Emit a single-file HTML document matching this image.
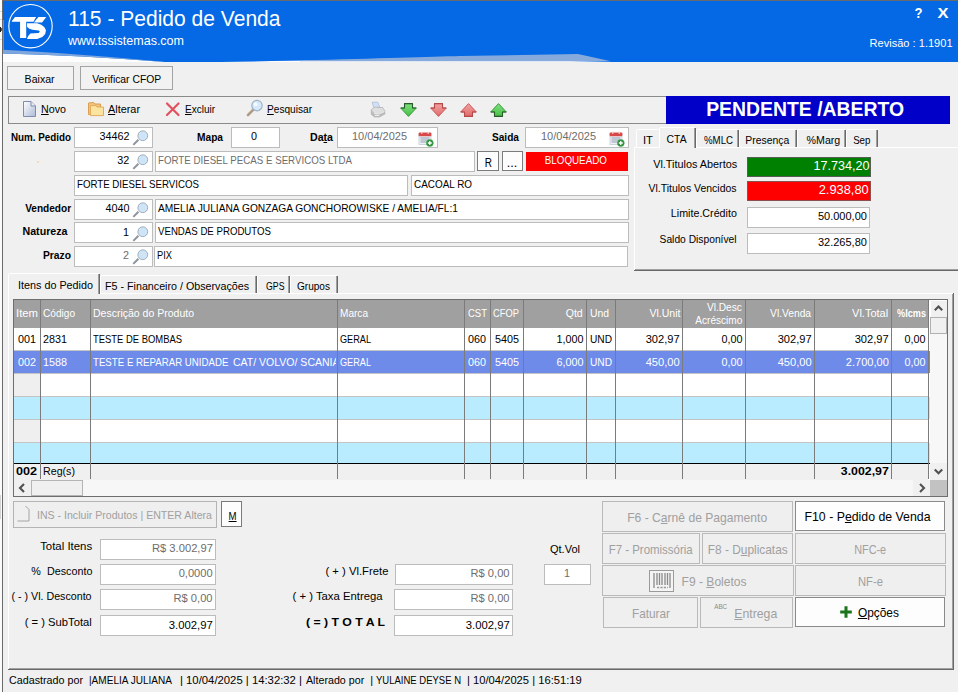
<!DOCTYPE html><html><head><meta charset="utf-8"><title>115 - Pedido de Venda</title><style>

html,body{margin:0;padding:0}
body{width:958px;height:692px;overflow:hidden;background:#f0f0f0;position:relative;font-family:"Liberation Sans", sans-serif;font-size:11px}
div,span.t,svg{position:absolute}
span.t{white-space:pre;display:block}
u{text-decoration:underline;text-underline-offset:1px}

</style></head><body>
<svg width="958" height="64" style="left:0;top:0" viewBox="0 0 958 64">
<rect x="0" y="0" width="3" height="64" fill="#f4f4f4"/>
<rect x="3" y="1" width="955" height="61" fill="#0568e4"/>
<rect x="3" y="0" width="955" height="1" fill="#6a6a6a"/>
<path d="M3,53.5 Q80,55.5 165,61.9 C215,62.4 270,61 330,60.3 L560,60.7 L612,62 L958,62 L958,64 L3,64 Z" fill="#fdfdfd"/>
<path d="M3,49.8 Q70,53 165,61.9 Q80,55.5 3,53.5 Z" fill="#7ea6dc"/>
<rect x="3" y="20" width="1" height="30" fill="#4f93ea"/>
<path d="M300,60.4 C380,58.5 430,56.6 460,56 L578,54 L611,61.2 L300,61.2 Z" fill="#86aadc"/>
<rect x="3" y="62" width="955" height="2" fill="#f0f0f0"/>
<circle cx="30.5" cy="26.2" r="21.7" fill="none" stroke="#fff" stroke-width="1.1"/>
<polygon points="11.90,21.01 15.02,17.11 36.10,17.11 33.49,21.79 26.21,21.79 26.21,37.92 20.07,37.92 20.07,21.79 11.90,21.79" fill="#fff"/>
<polygon points="38.44,17.11 46.24,17.11 42.08,22.57 33.86,22.57" fill="#fff"/>
<polygon points="26.99,23.35 37.14,23.35 41.30,24.65 44.42,27.25 45.98,30.37 45.20,34.01 42.34,36.88 37.14,38.96 26.99,38.96 28.03,36.36 30.37,33.49 38.70,32.97 39.84,31.52 38.70,30.48 32.45,29.85 29.33,28.81 26.99,26.73" fill="#fff"/>
</svg>
<div style="left:0px;top:0px;width:2px;height:692px;background:#fbfbfb;"></div>
<div style="left:0px;top:11px;width:2px;height:1px;background:#d9d9d9;"></div>
<div style="left:0px;top:19px;width:2px;height:1px;background:#d9d9d9;"></div>
<div style="left:0px;top:39px;width:2px;height:1px;background:#d9d9d9;"></div>
<div style="left:0px;top:27px;width:1px;height:5px;background:#1f1f1f;"></div>
<div style="left:1px;top:28px;width:1px;height:3px;background:#5a5a5a;"></div>
<div style="left:0px;top:495px;width:1px;height:24px;background:#d4d4d4;"></div>
<div style="left:2px;top:0px;width:1px;height:692px;background:#6a6a6a;"></div>
<span class="t" style="font-size:22px;line-height:29px;top:4.0px;color:#fff;left:68px;transform-origin:0 50%;transform:scaleX(0.9562);">115 - Pedido de Venda</span>
<span class="t" style="font-size:13px;line-height:17px;top:31.5px;color:#fff;left:67.5px;transform-origin:0 50%;transform:scaleX(0.9615);">www.tssistemas.com</span>
<span class="t" style="font-size:15px;line-height:20px;top:3.0px;color:#fff;font-weight:700;left:913.91px;transform-origin:50% 50%;transform:scaleX(0.8722);">?</span>
<span class="t" style="font-size:15px;line-height:20px;top:3.0px;color:#fff;font-weight:700;left:937.99px;transform-origin:50% 50%;transform:scaleX(1.0983);">X</span>
<span class="t" style="font-size:11px;line-height:14px;top:36.0px;color:#fff;left:870.44px;transform-origin:100% 50%;transform:scaleX(1.0053);">Revisão : 1.1901</span>
<div style="left:7px;top:66px;width:67px;height:24px;background:#f2f2f2;border:1px solid #a3a3a3;box-sizing:border-box;"></div>
<span class="t" style="font-size:11px;line-height:14px;top:71.5px;color:#000;left:24.41px;transform-origin:50% 50%;transform:scaleX(0.9619);">Baixar</span>
<div style="left:80px;top:66px;width:93px;height:24px;background:#f2f2f2;border:1px solid #a3a3a3;box-sizing:border-box;"></div>
<span class="t" style="font-size:11px;line-height:14px;top:71.5px;color:#000;left:89.82px;transform-origin:50% 50%;transform:scaleX(0.9406);">Verificar CFOP</span>
<div style="left:8px;top:96px;width:660px;height:28px;background:#f0f0f0;border:1px solid #8a8a8a;box-sizing:border-box;"></div>
<svg width="16" height="18" style="left:22px;top:100px" viewBox="0 0 16 18">
<defs><linearGradient id="pg" x1="0" y1="0" x2="1" y2="1"><stop offset="0" stop-color="#ffffff"/><stop offset="1" stop-color="#adbbd8"/></linearGradient></defs>
<path d="M1.5,1.5 H9 L13.5,6 V16.5 H1.5 Z" fill="url(#pg)" stroke="#7f8cab" stroke-width="1"/>
<path d="M9,1.5 V6 H13.5" fill="#e8edf6" stroke="#7f8cab" stroke-width="1"/></svg>
<span class="t" style="font-size:11px;line-height:14px;top:102.0px;color:#000;left:40.5px;transform-origin:0 50%;transform:scaleX(0.9726);"><u>N</u>ovo</span>
<svg width="18" height="16" style="left:87px;top:101px" viewBox="0 0 18 16">
<path d="M1.5,2 L6.5,1.4 L8,3 H13.5 V13.5 H1.5 Z" fill="#f3c27a" stroke="#d9a055" stroke-width="1"/>
<path d="M3.5,4.6 H9 L10,6 H16.5 V14.6 H3.5 Z" fill="#fbe3a0" stroke="#e2ac5c" stroke-width="1"/></svg>
<span class="t" style="font-size:11px;line-height:14px;top:102.0px;color:#000;left:108px;transform-origin:0 50%;transform:scaleX(0.9875);"><u>A</u>lterar</span>
<svg width="16" height="16" style="left:165px;top:101px" viewBox="0 0 16 16">
<path d="M2,2.5 L13.5,14 M13.5,2.5 L2,14" stroke="#e0525f" stroke-width="2.2" stroke-linecap="round" fill="none"/></svg>
<span class="t" style="font-size:11px;line-height:14px;top:102.0px;color:#000;left:185px;transform-origin:0 50%;transform:scaleX(0.9087);"><u>E</u>xcluir</span>
<svg width="18" height="18" style="left:246px;top:99px" viewBox="0 0 18 18">
<path d="M8.5,9.5 L2,16" stroke="#c9a06a" stroke-width="2.6" stroke-linecap="round"/>
<path d="M8.5,9.5 L2,16" stroke="#9a9aa0" stroke-width="1.2" stroke-linecap="round"/>
<circle cx="11" cy="6.6" r="5.2" fill="#d4e9fa" stroke="#9fb4c9" stroke-width="1.2"/>
<circle cx="9.6" cy="5.2" r="2" fill="#f4faff"/></svg>
<span class="t" style="font-size:11px;line-height:14px;top:102.0px;color:#000;left:267px;transform-origin:0 50%;transform:scaleX(0.9198);"><u>P</u>esquisar</span>
<svg width="16" height="18" style="left:370px;top:101px" viewBox="0 0 16 18">
<polygon points="2.1,1.2 7.8,1.2 9.8,6.4 3.9,6.8" fill="#cfdff7" stroke="#a9b9d0" stroke-width=".7"/>
<polygon points="1.3,8.6 4.8,6.2 12.7,6.6 14.9,10.2 14.9,13 9.4,16 4.6,16 1.3,13.4" fill="#bcbcbc" stroke="#a6a6a6" stroke-width=".6"/>
<polygon points="1.5,8.8 4.8,6.5 12.5,6.9 14.6,10.2 9.4,12.6 4.2,12.2" fill="#dedede"/>
<path d="M4.2,12.4 L9.4,12.8 L14.6,10.6" stroke="#f2f2f2" stroke-width=".8" fill="none"/>
<path d="M4.8,14.4 H9.2" stroke="#ececec" stroke-width="1.4"/></svg>
<svg width="17" height="14" style="left:400px;top:103px" viewBox="0 0 17 14">
<defs><linearGradient id="g400" x1="0" y1="0" x2="0" y2="1"><stop offset="0" stop-color="#7fe07f"/><stop offset="1" stop-color="#46c046"/></linearGradient></defs>
<path d="M4.5,0.6 H12.5 V5 H16.3 L8.5,13.4 L0.7,5 H4.5 Z" fill="url(#g400)" stroke="#3f9a3f" stroke-width="1" stroke-linejoin="round"/>
<path d="M0.7,5 H4.5 V0.6 H12.5 V5 H16.3" fill="none" stroke="#2b5a2b" stroke-width="1.1" stroke-linejoin="round"/></svg>
<svg width="17" height="14" style="left:430px;top:103px" viewBox="0 0 17 14">
<defs><linearGradient id="g430" x1="0" y1="0" x2="0" y2="1"><stop offset="0" stop-color="#f3a3a3"/><stop offset="1" stop-color="#e06a6a"/></linearGradient></defs>
<path d="M4.5,0.6 H12.5 V5 H16.3 L8.5,13.4 L0.7,5 H4.5 Z" fill="url(#g430)" stroke="#c95858" stroke-width="1" stroke-linejoin="round"/>
<path d="M0.7,5 H4.5 V0.6 H12.5 V5 H16.3" fill="none" stroke="#b44a4a" stroke-width="1.1" stroke-linejoin="round"/></svg>
<svg width="17" height="14" style="left:460px;top:102.5px" viewBox="0 0 17 14">
<defs><linearGradient id="g460" x1="0" y1="0" x2="0" y2="1"><stop offset="0" stop-color="#e06a6a"/><stop offset="1" stop-color="#f3a3a3"/></linearGradient></defs>
<path d="M4.5,0.6 H12.5 V5 H16.3 L8.5,13.4 L0.7,5 H4.5 Z" transform="rotate(180 8.5 7)" fill="url(#g460)" stroke="#c95858" stroke-width="1" stroke-linejoin="round"/>
<path d="M0.7,5 H4.5 V0.6 H12.5 V5 H16.3" transform="rotate(180 8.5 7)" fill="none" stroke="#b44a4a" stroke-width="1.1" stroke-linejoin="round"/></svg>
<svg width="17" height="14" style="left:490px;top:102.5px" viewBox="0 0 17 14">
<defs><linearGradient id="g490" x1="0" y1="0" x2="0" y2="1"><stop offset="0" stop-color="#46c046"/><stop offset="1" stop-color="#7fe07f"/></linearGradient></defs>
<path d="M4.5,0.6 H12.5 V5 H16.3 L8.5,13.4 L0.7,5 H4.5 Z" transform="rotate(180 8.5 7)" fill="url(#g490)" stroke="#3f9a3f" stroke-width="1" stroke-linejoin="round"/>
<path d="M0.7,5 H4.5 V0.6 H12.5 V5 H16.3" transform="rotate(180 8.5 7)" fill="none" stroke="#2b5a2b" stroke-width="1.1" stroke-linejoin="round"/></svg>
<div style="left:666px;top:96px;width:284px;height:28px;background:#0000c8;"></div>
<span class="t" style="font-size:21px;line-height:27px;top:94.5px;color:#fff;font-weight:700;left:697.84px;transform-origin:50% 50%;transform:scaleX(0.9239);">PENDENTE /ABERTO</span>
<span class="t" style="font-size:11px;line-height:14px;top:129.5px;color:#000;font-weight:700;left:11px;transform-origin:0 50%;transform:scaleX(0.8924);">Num. Pedido</span>
<div style="left:74px;top:127px;width:79px;height:21px;background:#fff;border:1px solid #bcbcbc;box-sizing:border-box;"></div>
<span class="t" style="font-size:11px;line-height:14px;top:129.0px;color:#000;left:98.91px;transform-origin:100% 50%;transform:scaleX(0.9806);">34462</span>
<svg width="18" height="17" style="left:131.5px;top:130px" viewBox="0 0 18 17">
<path d="M6.4,9.8 L1.3,14.9" stroke="#8d939c" stroke-width="2" stroke-linecap="butt"/>
<circle cx="10.8" cy="5.75" r="4.9" fill="#cfe5f7" stroke="#a3afbb" stroke-width="1"/></svg>
<span class="t" style="font-size:11px;line-height:14px;top:129.5px;color:#000;font-weight:700;left:197px;transform-origin:0 50%;transform:scaleX(0.9244);">Mapa</span>
<div style="left:231px;top:127px;width:49px;height:21px;background:#fff;border:1px solid #bcbcbc;box-sizing:border-box;"></div>
<span class="t" style="font-size:11px;line-height:14px;top:129.0px;color:#000;left:250.94px;transform-origin:50% 50%;transform:scaleX(0.9796);">0</span>
<span class="t" style="font-size:11px;line-height:14px;top:129.5px;color:#000;font-weight:700;left:310px;transform-origin:0 50%;transform:scaleX(0.964);">Da<u>t</u>a</span>
<div style="left:337px;top:127px;width:101px;height:21px;background:#fff;border:1px solid #bcbcbc;box-sizing:border-box;"></div>
<span class="t" style="font-size:11px;line-height:14px;top:129.0px;color:#6d6d6d;left:352px;transform-origin:0 50%;transform:scaleX(0.9989);">10/04/2025</span>
<svg width="16" height="16" style="left:418px;top:131px" viewBox="0 0 16 16">
<rect x="1" y="4" width="12" height="9.5" fill="#eef1f5" stroke="#c3c9d2" stroke-width=".8"/>
<path d="M2.5,7 H11.5 M2.5,9 H11.5 M2.5,11 H8" stroke="#8e9db0" stroke-width="1"/>
<rect x=".6" y="1.5" width="12.8" height="3.8" rx="1" fill="#d84848"/>
<path d="M3.8,.8 V3 M10.2,.8 V3" stroke="#f6c9c9" stroke-width="1.2"/>
<circle cx="11.8" cy="12" r="3.5" fill="#2e8b3a" stroke="#47b457" stroke-width=".6"/>
<path d="M11.8,10 V14 M9.8,12 H13.8" stroke="#fff" stroke-width="1.3"/></svg>
<span class="t" style="font-size:11px;line-height:14px;top:129.5px;color:#000;font-weight:700;left:492px;transform-origin:0 50%;transform:scaleX(0.9196);">Saida</span>
<div style="left:525px;top:127px;width:104px;height:21px;background:#fff;border:1px solid #bcbcbc;box-sizing:border-box;"></div>
<span class="t" style="font-size:11px;line-height:14px;top:129.0px;color:#6d6d6d;left:541px;transform-origin:0 50%;transform:scaleX(0.9989);">10/04/2025</span>
<svg width="16" height="16" style="left:609px;top:131px" viewBox="0 0 16 16">
<rect x="1" y="4" width="12" height="9.5" fill="#eef1f5" stroke="#c3c9d2" stroke-width=".8"/>
<path d="M2.5,7 H11.5 M2.5,9 H11.5 M2.5,11 H8" stroke="#8e9db0" stroke-width="1"/>
<rect x=".6" y="1.5" width="12.8" height="3.8" rx="1" fill="#d84848"/>
<path d="M3.8,.8 V3 M10.2,.8 V3" stroke="#f6c9c9" stroke-width="1.2"/>
<circle cx="11.8" cy="12" r="3.5" fill="#2e8b3a" stroke="#47b457" stroke-width=".6"/>
<path d="M11.8,10 V14 M9.8,12 H13.8" stroke="#fff" stroke-width="1.3"/></svg>
<div style="left:74px;top:151px;width:79px;height:21px;background:#fff;border:1px solid #bcbcbc;box-sizing:border-box;"></div>
<span class="t" style="font-size:11px;line-height:14px;top:153.0px;color:#000;left:117.25px;transform-origin:100% 50%;transform:scaleX(0.9796);">32</span>
<svg width="18" height="17" style="left:131.5px;top:154px" viewBox="0 0 18 17">
<path d="M6.4,9.8 L1.3,14.9" stroke="#8d939c" stroke-width="2" stroke-linecap="butt"/>
<circle cx="10.8" cy="5.75" r="4.9" fill="#cfe5f7" stroke="#a3afbb" stroke-width="1"/></svg>
<div style="left:155px;top:151px;width:320px;height:21px;background:#fff;border:1px solid #bcbcbc;box-sizing:border-box;"></div>
<span class="t" style="font-size:11px;line-height:14px;top:153.0px;color:#6d6d6d;left:158px;transform-origin:0 50%;transform:scaleX(0.8832);">FORTE DIESEL PECAS E SERVICOS LTDA</span>
<div style="left:477px;top:151px;width:22px;height:20px;background:#fdfdfd;border:1px solid #7c7c7c;box-sizing:border-box;"></div>
<span class="t" style="font-size:12px;line-height:16px;top:154.5px;color:#000;left:484.36px;transform-origin:50% 50%;transform:scaleX(0.8303);">R</span>
<div style="left:502px;top:151px;width:21px;height:20px;background:#fdfdfd;border:1px solid #7c7c7c;box-sizing:border-box;"></div>
<span class="t" style="font-size:12px;line-height:16px;top:154.5px;color:#000;left:507.39px;transform-origin:50% 50%;transform:scaleX(1.0484);">...</span>
<div style="left:526px;top:152px;width:102px;height:19px;background:#ff0000;"></div>
<span class="t" style="font-size:11px;line-height:14px;top:153.0px;color:#fff;left:541.16px;transform-origin:50% 50%;transform:scaleX(0.8897);">BLOQUEADO</span>
<div style="left:37px;top:161px;width:2px;height:2px;background:#f1dfb4"></div>
<div style="left:74px;top:175px;width:334px;height:21px;background:#fff;border:1px solid #bcbcbc;box-sizing:border-box;"></div>
<span class="t" style="font-size:11px;line-height:14px;top:177.0px;color:#000;left:77px;transform-origin:0 50%;transform:scaleX(0.8805);">FORTE DIESEL SERVICOS</span>
<div style="left:411px;top:175px;width:218px;height:21px;background:#fff;border:1px solid #bcbcbc;box-sizing:border-box;"></div>
<span class="t" style="font-size:11px;line-height:14px;top:177.0px;color:#000;left:414px;transform-origin:0 50%;transform:scaleX(0.9008);">CACOAL RO</span>
<span class="t" style="font-size:11px;line-height:14px;top:200.5px;color:#000;font-weight:700;left:20.88px;transform-origin:100% 50%;transform:scaleX(0.9177);">Vendedor</span>
<div style="left:74px;top:199px;width:79px;height:21px;background:#fff;border:1px solid #bcbcbc;box-sizing:border-box;"></div>
<span class="t" style="font-size:11px;line-height:14px;top:201.0px;color:#000;left:105.02px;transform-origin:100% 50%;transform:scaleX(0.9802);">4040</span>
<svg width="18" height="17" style="left:131.5px;top:202px" viewBox="0 0 18 17">
<path d="M6.4,9.8 L1.3,14.9" stroke="#8d939c" stroke-width="2" stroke-linecap="butt"/>
<circle cx="10.8" cy="5.75" r="4.9" fill="#cfe5f7" stroke="#a3afbb" stroke-width="1"/></svg>
<div style="left:155px;top:199px;width:474px;height:21px;background:#fff;border:1px solid #bcbcbc;box-sizing:border-box;"></div>
<span class="t" style="font-size:11px;line-height:14px;top:201.0px;color:#000;left:158px;transform-origin:0 50%;transform:scaleX(0.9277);">AMELIA JULIANA GONZAGA GONCHOROWISKE / AMELIA/FL:1</span>
<span class="t" style="font-size:11px;line-height:14px;top:224.0px;color:#000;font-weight:700;left:20.53px;transform-origin:100% 50%;transform:scaleX(0.9684);">Natureza</span>
<div style="left:74px;top:222px;width:79px;height:21px;background:#fff;border:1px solid #bcbcbc;box-sizing:border-box;"></div>
<span class="t" style="font-size:11px;line-height:14px;top:224.5px;color:#000;left:123.38px;transform-origin:100% 50%;transform:scaleX(0.9796);">1</span>
<svg width="18" height="17" style="left:131.5px;top:225.5px" viewBox="0 0 18 17">
<path d="M6.4,9.8 L1.3,14.9" stroke="#8d939c" stroke-width="2" stroke-linecap="butt"/>
<circle cx="10.8" cy="5.75" r="4.9" fill="#cfe5f7" stroke="#a3afbb" stroke-width="1"/></svg>
<div style="left:155px;top:222px;width:474px;height:21px;background:#fff;border:1px solid #bcbcbc;box-sizing:border-box;"></div>
<span class="t" style="font-size:11px;line-height:14px;top:224.0px;color:#000;left:158px;transform-origin:0 50%;transform:scaleX(0.8775);">VENDAS DE PRODUTOS</span>
<span class="t" style="font-size:11px;line-height:14px;top:248.0px;color:#000;font-weight:700;left:41.03px;transform-origin:100% 50%;transform:scaleX(0.9343);">Prazo</span>
<div style="left:74px;top:246px;width:79px;height:21px;background:#fff;border:1px solid #bcbcbc;box-sizing:border-box;"></div>
<span class="t" style="font-size:11px;line-height:14px;top:248.0px;color:#6d6d6d;left:123.38px;transform-origin:100% 50%;transform:scaleX(0.9796);">2</span>
<svg width="18" height="17" style="left:131.5px;top:249px" viewBox="0 0 18 17">
<path d="M6.4,9.8 L1.3,14.9" stroke="#8d939c" stroke-width="2" stroke-linecap="butt"/>
<circle cx="10.8" cy="5.75" r="4.9" fill="#cfe5f7" stroke="#a3afbb" stroke-width="1"/></svg>
<div style="left:154px;top:246px;width:474px;height:21px;background:#fff;border:1px solid #bcbcbc;box-sizing:border-box;"></div>
<span class="t" style="font-size:11px;line-height:14px;top:248.0px;color:#000;left:157px;transform-origin:0 50%;transform:scaleX(0.8458);">PIX</span>
<div style="left:634px;top:147px;width:330px;height:124px;background:#f0f0f0;"></div>
<div style="left:634px;top:147px;width:330px;height:1px;background:#ffffff;"></div>
<div style="left:634px;top:147px;width:1px;height:124px;background:#ffffff;"></div>
<div style="left:634px;top:270px;width:330px;height:1px;background:#696969;"></div>
<div style="left:963px;top:147px;width:1px;height:124px;background:#696969;"></div>
<div style="left:635px;top:269px;width:328px;height:1px;background:#a0a0a0;"></div>
<div style="left:962px;top:148px;width:1px;height:122px;background:#a0a0a0;"></div>
<div style="left:636px;top:129px;width:23px;height:18px;background:#f0f0f0;"></div>
<div style="left:636px;top:130px;width:1px;height:17px;background:#ffffff;"></div>
<div style="left:637px;top:129px;width:21px;height:1px;background:#ffffff;"></div>
<span class="t" style="font-size:11px;line-height:14px;top:132.5px;color:#000;left:642.71px;transform-origin:50% 50%;transform:scaleX(1.0224);">IT</span>
<div style="left:696px;top:129px;width:43px;height:18px;background:#f0f0f0;"></div>
<div style="left:696px;top:130px;width:1px;height:17px;background:#ffffff;"></div>
<div style="left:697px;top:129px;width:41px;height:1px;background:#ffffff;"></div>
<div style="left:738px;top:130px;width:1px;height:17px;background:#696969;"></div>
<div style="left:737px;top:130px;width:1px;height:17px;background:#a0a0a0;"></div>
<span class="t" style="font-size:11px;line-height:14px;top:132.5px;color:#000;left:701.69px;transform-origin:50% 50%;transform:scaleX(0.8784);">%MLC</span>
<div style="left:739px;top:129px;width:58px;height:18px;background:#f0f0f0;"></div>
<div style="left:739px;top:130px;width:1px;height:17px;background:#ffffff;"></div>
<div style="left:740px;top:129px;width:56px;height:1px;background:#ffffff;"></div>
<div style="left:796px;top:130px;width:1px;height:17px;background:#696969;"></div>
<div style="left:795px;top:130px;width:1px;height:17px;background:#a0a0a0;"></div>
<span class="t" style="font-size:11px;line-height:14px;top:132.5px;color:#000;left:743.96px;transform-origin:50% 50%;transform:scaleX(0.9466);">Presença</span>
<div style="left:797px;top:129px;width:49px;height:18px;background:#f0f0f0;"></div>
<div style="left:797px;top:130px;width:1px;height:17px;background:#ffffff;"></div>
<div style="left:798px;top:129px;width:47px;height:1px;background:#ffffff;"></div>
<div style="left:845px;top:130px;width:1px;height:17px;background:#696969;"></div>
<div style="left:844px;top:130px;width:1px;height:17px;background:#a0a0a0;"></div>
<span class="t" style="font-size:11px;line-height:14px;top:132.5px;color:#000;left:805.88px;transform-origin:50% 50%;transform:scaleX(0.9672);">%Marg</span>
<div style="left:846px;top:129px;width:32px;height:18px;background:#f0f0f0;"></div>
<div style="left:846px;top:130px;width:1px;height:17px;background:#ffffff;"></div>
<div style="left:847px;top:129px;width:30px;height:1px;background:#ffffff;"></div>
<div style="left:877px;top:130px;width:1px;height:17px;background:#696969;"></div>
<div style="left:876px;top:130px;width:1px;height:17px;background:#a0a0a0;"></div>
<span class="t" style="font-size:11px;line-height:14px;top:132.5px;color:#000;left:851.51px;transform-origin:50% 50%;transform:scaleX(0.8836);">Sep</span>
<div style="left:659px;top:127px;width:37px;height:21px;background:#f0f0f0;"></div>
<div style="left:659px;top:128px;width:1px;height:20px;background:#ffffff;"></div>
<div style="left:660px;top:127px;width:35px;height:1px;background:#ffffff;"></div>
<div style="left:695px;top:128px;width:1px;height:20px;background:#696969;"></div>
<div style="left:694px;top:128px;width:1px;height:20px;background:#a0a0a0;"></div>
<span class="t" style="font-size:11px;line-height:14px;top:131.5px;color:#000;left:665.91px;transform-origin:50% 50%;transform:scaleX(0.944);">CTA</span>
<span class="t" style="font-size:11px;line-height:14px;top:157.0px;color:#000;left:651.81px;transform-origin:100% 50%;transform:scaleX(0.9861);">Vl.Titulos Abertos</span>
<div style="left:747px;top:157px;width:124px;height:20px;background:#008000;border:1px solid #555f55;box-sizing:border-box;"></div>
<span class="t" style="font-size:12px;line-height:16px;top:158.0px;color:#fff;left:815.61px;transform-origin:100% 50%;transform:scaleX(1.0489);">17.734,20</span>
<span class="t" style="font-size:11px;line-height:14px;top:181.0px;color:#000;left:644.47px;transform-origin:100% 50%;transform:scaleX(0.951);">Vl.Titulos Vencidos</span>
<div style="left:747px;top:181px;width:124px;height:20px;background:#ff0000;border:1px solid #8a5050;box-sizing:border-box;"></div>
<span class="t" style="font-size:12px;line-height:16px;top:182.0px;color:#fff;left:822.28px;transform-origin:100% 50%;transform:scaleX(1.0702);">2.938,80</span>
<span class="t" style="font-size:11px;line-height:14px;top:206.0px;color:#000;left:669.14px;transform-origin:100% 50%;transform:scaleX(0.9726);">Limite.Crédito</span>
<div style="left:747px;top:207px;width:123px;height:21px;background:#fff;border:1px solid #bcbcbc;box-sizing:border-box;"></div>
<span class="t" style="font-size:11px;line-height:14px;top:209.0px;color:#000;left:817.56px;transform-origin:100% 50%;transform:scaleX(1.0013);">50.000,00</span>
<span class="t" style="font-size:11px;line-height:14px;top:232.0px;color:#000;left:654.44px;transform-origin:100% 50%;transform:scaleX(0.9326);">Saldo Disponível</span>
<div style="left:747px;top:233px;width:123px;height:21px;background:#fff;border:1px solid #bcbcbc;box-sizing:border-box;"></div>
<span class="t" style="font-size:11px;line-height:14px;top:235.0px;color:#000;left:817.56px;transform-origin:100% 50%;transform:scaleX(1.0013);">32.265,80</span>
<div style="left:8px;top:293px;width:946px;height:377px;background:#f0f0f0;"></div>
<div style="left:8px;top:293px;width:946px;height:1px;background:#ffffff;"></div>
<div style="left:8px;top:293px;width:1px;height:377px;background:#ffffff;"></div>
<div style="left:8px;top:669px;width:946px;height:1px;background:#696969;"></div>
<div style="left:953px;top:293px;width:1px;height:377px;background:#696969;"></div>
<div style="left:9px;top:668px;width:944px;height:1px;background:#a0a0a0;"></div>
<div style="left:952px;top:294px;width:1px;height:375px;background:#a0a0a0;"></div>
<div style="left:100px;top:275px;width:157px;height:18px;background:#f0f0f0;"></div>
<div style="left:100px;top:276px;width:1px;height:17px;background:#ffffff;"></div>
<div style="left:101px;top:275px;width:155px;height:1px;background:#ffffff;"></div>
<div style="left:256px;top:276px;width:1px;height:17px;background:#696969;"></div>
<div style="left:255px;top:276px;width:1px;height:17px;background:#a0a0a0;"></div>
<span class="t" style="font-size:11px;line-height:14px;top:278.5px;color:#000;left:105px;transform-origin:0 50%;transform:scaleX(0.9733);">F5 - Financeiro / Observações</span>
<div style="left:257px;top:275px;width:33px;height:18px;background:#f0f0f0;"></div>
<div style="left:257px;top:276px;width:1px;height:17px;background:#ffffff;"></div>
<div style="left:258px;top:275px;width:31px;height:1px;background:#ffffff;"></div>
<div style="left:289px;top:276px;width:1px;height:17px;background:#696969;"></div>
<div style="left:288px;top:276px;width:1px;height:17px;background:#a0a0a0;"></div>
<span class="t" style="font-size:11px;line-height:14px;top:278.5px;color:#000;left:265.5px;transform-origin:0 50%;transform:scaleX(0.7962);">GPS</span>
<div style="left:290px;top:275px;width:48px;height:18px;background:#f0f0f0;"></div>
<div style="left:290px;top:276px;width:1px;height:17px;background:#ffffff;"></div>
<div style="left:291px;top:275px;width:46px;height:1px;background:#ffffff;"></div>
<div style="left:337px;top:276px;width:1px;height:17px;background:#696969;"></div>
<div style="left:336px;top:276px;width:1px;height:17px;background:#a0a0a0;"></div>
<span class="t" style="font-size:11px;line-height:14px;top:278.5px;color:#000;left:297px;transform-origin:0 50%;transform:scaleX(0.9147);">Grupos</span>
<div style="left:8px;top:273px;width:92px;height:21px;background:#f0f0f0;"></div>
<div style="left:8px;top:274px;width:1px;height:20px;background:#ffffff;"></div>
<div style="left:9px;top:273px;width:90px;height:1px;background:#ffffff;"></div>
<div style="left:99px;top:274px;width:1px;height:20px;background:#696969;"></div>
<div style="left:98px;top:274px;width:1px;height:20px;background:#a0a0a0;"></div>
<span class="t" style="font-size:11px;line-height:14px;top:277.5px;color:#000;left:18px;transform-origin:0 50%;transform:scaleX(0.981);">Itens do Pedido</span>
<div style="left:13px;top:299px;width:935px;height:198px;background:#ffffff;border:1px solid #6e6e6e;box-sizing:border-box;"></div>
<div style="left:14px;top:300px;width:914px;height:28px;background:#a0a0a0;"></div>
<div style="left:14px;top:328px;width:914px;height:22px;background:#ffffff;"></div>
<div style="left:14px;top:350px;width:915px;height:1px;background:#c4c4c4;"></div>
<div style="left:14px;top:351px;width:916px;height:22px;background:#6e8bea;"></div>
<div style="left:14px;top:373px;width:915px;height:1px;background:#c4c4c4;"></div>
<div style="left:14px;top:374px;width:914px;height:22px;background:#ffffff;"></div>
<div style="left:14px;top:396px;width:915px;height:1px;background:#c4c4c4;"></div>
<div style="left:14px;top:374px;width:26px;height:22px;background:#efefef;"></div>
<div style="left:14px;top:397px;width:916px;height:22px;background:#b9ecff;"></div>
<div style="left:14px;top:419px;width:915px;height:1px;background:#c4c4c4;"></div>
<div style="left:14px;top:420px;width:914px;height:22px;background:#ffffff;"></div>
<div style="left:14px;top:442px;width:915px;height:1px;background:#c4c4c4;"></div>
<div style="left:14px;top:420px;width:26px;height:22px;background:#efefef;"></div>
<div style="left:14px;top:443px;width:916px;height:20px;background:#b9ecff;"></div>
<div style="left:14px;top:463px;width:916px;height:1px;background:#000000;"></div>
<div style="left:14px;top:464px;width:914px;height:16px;background:#f0f0f0;"></div>
<div style="left:40px;top:300px;width:1px;height:179px;background:#7b7b7b;"></div>
<div style="left:90px;top:300px;width:1px;height:179px;background:#7b7b7b;"></div>
<div style="left:337px;top:300px;width:1px;height:179px;background:#7b7b7b;"></div>
<div style="left:464px;top:300px;width:1px;height:179px;background:#7b7b7b;"></div>
<div style="left:490px;top:300px;width:1px;height:179px;background:#7b7b7b;"></div>
<div style="left:523px;top:300px;width:1px;height:179px;background:#7b7b7b;"></div>
<div style="left:586px;top:300px;width:1px;height:179px;background:#7b7b7b;"></div>
<div style="left:615px;top:300px;width:1px;height:179px;background:#7b7b7b;"></div>
<div style="left:682px;top:300px;width:1px;height:179px;background:#7b7b7b;"></div>
<div style="left:745px;top:300px;width:1px;height:179px;background:#7b7b7b;"></div>
<div style="left:814px;top:300px;width:1px;height:179px;background:#7b7b7b;"></div>
<div style="left:891px;top:300px;width:1px;height:179px;background:#7b7b7b;"></div>
<div style="left:928px;top:300px;width:1px;height:179px;background:#7b7b7b;"></div>
<div style="left:930px;top:300px;width:17px;height:180px;background:#f7f7f7;"></div>
<div style="left:930px;top:300px;width:17px;height:17px;background:#f0f0f0;"></div>
<div style="left:930px;top:300px;width:17px;height:1px;background:#ffffff;"></div>
<div style="left:930px;top:300px;width:1px;height:17px;background:#ffffff;"></div>
<svg width="17" height="17" style="left:930px;top:300px" viewBox="0 0 17 17"><path d="M4.8,10.3 L8.5,6.6 L12.2,10.3" fill="none" stroke="#505050" stroke-width="2.1"/></svg>
<div style="left:930px;top:317px;width:17px;height:17px;background:#f0f0f0;border:1px solid #b0b0b0;box-sizing:border-box;"></div>
<svg width="17" height="17" style="left:930px;top:463px;background:#f0f0f0" viewBox="0 0 17 17"><path d="M4.8,6.5 L8.5,10.2 L12.2,6.5" fill="none" stroke="#505050" stroke-width="2.1"/></svg>
<div style="left:14px;top:480px;width:916px;height:16px;background:#f7f7f7;"></div>
<svg width="17" height="16" style="left:14px;top:480px;background:#f0f0f0" viewBox="0 0 17 16"><path d="M10,4 L6,8 L10,12" fill="none" stroke="#505050" stroke-width="2.1"/></svg>
<div style="left:31px;top:480px;width:52px;height:16px;background:#f0f0f0;border:1px solid #b5b5b5;box-sizing:border-box;"></div>
<svg width="17" height="16" style="left:913px;top:480px;background:#f0f0f0" viewBox="0 0 17 16"><path d="M7,4 L11,8 L7,12" fill="none" stroke="#505050" stroke-width="2.1"/></svg>
<div style="left:930px;top:480px;width:17px;height:16px;background:#c2c2c2;"></div>
<span class="t" style="font-size:11px;line-height:14px;top:305.5px;color:#ffffff;left:15.5px;transform-origin:0 50%;transform:scaleX(1.0277);">Item</span>
<span class="t" style="font-size:11px;line-height:14px;top:305.5px;color:#ffffff;left:43px;transform-origin:0 50%;transform:scaleX(0.918);">Código</span>
<span class="t" style="font-size:11px;line-height:14px;top:305.5px;color:#ffffff;left:93px;transform-origin:0 50%;transform:scaleX(0.9548);">Descrição do Produto</span>
<span class="t" style="font-size:11px;line-height:14px;top:305.5px;color:#ffffff;left:340px;transform-origin:0 50%;transform:scaleX(0.9162);">Marca</span>
<span class="t" style="font-size:11px;line-height:14px;top:305.5px;color:#ffffff;left:467.5px;transform-origin:0 50%;transform:scaleX(0.8636);">CST</span>
<span class="t" style="font-size:11px;line-height:14px;top:305.5px;color:#ffffff;left:492.5px;transform-origin:0 50%;transform:scaleX(0.8507);">CFOP</span>
<span class="t" style="font-size:11px;line-height:14px;top:305.5px;color:#ffffff;left:565.27px;transform-origin:100% 50%;transform:scaleX(0.9586);">Qtd</span>
<span class="t" style="font-size:11px;line-height:14px;top:305.5px;color:#ffffff;left:590px;transform-origin:0 50%;transform:scaleX(0.9412);">Und</span>
<span class="t" style="font-size:11px;line-height:14px;top:305.5px;color:#ffffff;left:647.59px;transform-origin:100% 50%;transform:scaleX(0.9566);">Vl.Unit</span>
<span class="t" style="font-size:11px;line-height:14px;top:299.5px;color:#ffffff;left:704.09px;transform-origin:100% 50%;transform:scaleX(0.9233);">Vl.Desc</span>
<span class="t" style="font-size:11px;line-height:14px;top:312.5px;color:#ffffff;left:690.66px;transform-origin:100% 50%;transform:scaleX(0.9154);">Acréscimo</span>
<span class="t" style="font-size:11px;line-height:14px;top:305.5px;color:#ffffff;left:766.95px;transform-origin:100% 50%;transform:scaleX(0.9308);">Vl.Venda</span>
<span class="t" style="font-size:11px;line-height:14px;top:305.5px;color:#ffffff;left:851.92px;transform-origin:100% 50%;transform:scaleX(0.9978);">Vl.Total</span>
<span class="t" style="font-size:10px;line-height:13px;top:306.5px;color:#ffffff;font-weight:700;left:896.5px;transform-origin:0 50%;transform:scaleX(0.9152);">%Icms</span>
<span class="t" style="font-size:11px;line-height:14px;top:331.5px;color:#000;left:17.5px;transform-origin:0 50%;transform:scaleX(0.9804);">001</span>
<span class="t" style="font-size:11px;line-height:14px;top:331.5px;color:#000;left:43px;transform-origin:0 50%;transform:scaleX(0.9802);">2831</span>
<span class="t" style="font-size:11px;line-height:14px;top:331.5px;color:#000;left:93px;transform-origin:0 50%;transform:scaleX(0.8564);">TESTE DE BOMBAS</span>
<span class="t" style="font-size:11px;line-height:14px;top:331.5px;color:#000;left:340px;transform-origin:0 50%;transform:scaleX(0.8312);">GERAL</span>
<span class="t" style="font-size:11px;line-height:14px;top:331.5px;color:#000;left:467.5px;transform-origin:0 50%;transform:scaleX(0.9804);">060</span>
<span class="t" style="font-size:11px;line-height:14px;top:331.5px;color:#000;left:495px;transform-origin:0 50%;transform:scaleX(0.9802);">5405</span>
<span class="t" style="font-size:11px;line-height:14px;top:331.5px;color:#000;left:555.97px;transform-origin:100% 50%;transform:scaleX(0.9807);">1,000</span>
<span class="t" style="font-size:11px;line-height:14px;top:331.5px;color:#000;left:590px;transform-origin:0 50%;transform:scaleX(0.9227);">UND</span>
<span class="t" style="font-size:11px;line-height:14px;top:331.5px;color:#000;left:646.34px;transform-origin:100% 50%;transform:scaleX(1.0102);">302,97</span>
<span class="t" style="font-size:11px;line-height:14px;top:331.5px;color:#000;left:721.08px;transform-origin:100% 50%;transform:scaleX(0.9803);">0,00</span>
<span class="t" style="font-size:11px;line-height:14px;top:331.5px;color:#000;left:778.34px;transform-origin:100% 50%;transform:scaleX(1.0102);">302,97</span>
<span class="t" style="font-size:11px;line-height:14px;top:331.5px;color:#000;left:854.84px;transform-origin:100% 50%;transform:scaleX(1.0102);">302,97</span>
<span class="t" style="font-size:11px;line-height:14px;top:331.5px;color:#000;left:904.08px;transform-origin:100% 50%;transform:scaleX(0.9803);">0,00</span>
<span class="t" style="font-size:11px;line-height:14px;top:354.5px;color:#fff;left:17.5px;transform-origin:0 50%;transform:scaleX(0.9804);">002</span>
<span class="t" style="font-size:11px;line-height:14px;top:354.5px;color:#fff;left:43px;transform-origin:0 50%;transform:scaleX(0.9802);">1588</span>
<span class="t" style="font-size:11px;line-height:14px;top:354.5px;color:#fff;left:93px;transform-origin:0 50%;transform:scaleX(0.8802);">TESTE E REPARAR UNIDADE</span>
<span class="t" style="font-size:11px;line-height:14px;top:354.5px;color:#fff;left:232.6px;transform-origin:0 50%;transform:scaleX(0.9556);">CAT/ VOLVO/ SCANIA</span>
<span class="t" style="font-size:11px;line-height:14px;top:354.5px;color:#fff;left:340px;transform-origin:0 50%;transform:scaleX(0.8312);">GERAL</span>
<span class="t" style="font-size:11px;line-height:14px;top:354.5px;color:#fff;left:467.5px;transform-origin:0 50%;transform:scaleX(0.9804);">060</span>
<span class="t" style="font-size:11px;line-height:14px;top:354.5px;color:#fff;left:495px;transform-origin:0 50%;transform:scaleX(0.9802);">5405</span>
<span class="t" style="font-size:11px;line-height:14px;top:354.5px;color:#fff;left:555.97px;transform-origin:100% 50%;transform:scaleX(0.9807);">6,000</span>
<span class="t" style="font-size:11px;line-height:14px;top:354.5px;color:#fff;left:590px;transform-origin:0 50%;transform:scaleX(0.9227);">UND</span>
<span class="t" style="font-size:11px;line-height:14px;top:354.5px;color:#fff;left:646.34px;transform-origin:100% 50%;transform:scaleX(1.0102);">450,00</span>
<span class="t" style="font-size:11px;line-height:14px;top:354.5px;color:#fff;left:721.08px;transform-origin:100% 50%;transform:scaleX(0.9803);">0,00</span>
<span class="t" style="font-size:11px;line-height:14px;top:354.5px;color:#fff;left:778.34px;transform-origin:100% 50%;transform:scaleX(1.0102);">450,00</span>
<span class="t" style="font-size:11px;line-height:14px;top:354.5px;color:#fff;left:845.67px;transform-origin:100% 50%;transform:scaleX(1.004);">2.700,00</span>
<span class="t" style="font-size:11px;line-height:14px;top:354.5px;color:#fff;left:904.08px;transform-origin:100% 50%;transform:scaleX(0.9803);">0,00</span>
<div style="left:336px;top:351px;width:1px;height:22px;background:#6e8bea;"></div>
<div style="left:337px;top:351px;width:1px;height:22px;background:#7b7b7b;"></div>
<div style="left:338px;top:351px;width:2px;height:22px;background:#6e8bea;"></div>
<span class="t" style="font-size:11px;line-height:14px;top:464.0px;color:#000;font-weight:700;left:15.8px;transform-origin:0 50%;transform:scaleX(1.1438);">002</span>
<span class="t" style="font-size:11px;line-height:14px;top:464.0px;color:#000;left:42.5px;transform-origin:0 50%;transform:scaleX(0.9692);">Reg(s)</span>
<span class="t" style="font-size:11px;line-height:14px;top:464.0px;color:#000;font-weight:700;left:845.67px;transform-origin:100% 50%;transform:scaleX(1.1208);">3.002,97</span>
<div style="left:13px;top:501px;width:204px;height:27px;background:#efefef;border:1px solid #b4b4b4;box-sizing:border-box;"></div>
<svg width="13" height="17" style="left:16.5px;top:505px" viewBox="0 0 13 17"><path d="M.5,16 H12 V4.5 L8.5,1" fill="none" stroke="#a3a3a3" stroke-width="1"/></svg>
<span class="t" style="font-size:11px;line-height:14px;top:507.5px;color:#a0a0a0;left:36.5px;transform-origin:0 50%;transform:scaleX(0.9616);">INS - Incluir Produtos | ENTER Altera</span>
<div style="left:221px;top:501px;width:21px;height:26px;background:#fdfdfd;border:1px solid #7a7a7a;box-sizing:border-box;"></div>
<span class="t" style="font-size:11px;line-height:14px;top:509.0px;color:#000;left:227.81px;transform-origin:50% 50%;transform:scaleX(0.8722);"><u>M</u></span>
<span class="t" style="font-size:11px;line-height:14px;top:539.0px;color:#000;left:41.86px;transform-origin:100% 50%;transform:scaleX(1.0371);">Total Itens</span>
<div style="left:100px;top:539px;width:116px;height:21px;background:#fff;border:1px solid #bcbcbc;box-sizing:border-box;"></div>
<span class="t" style="font-size:11px;line-height:14px;top:541.0px;color:#6d6d6d;left:152.56px;transform-origin:100% 50%;transform:scaleX(1.0177);">R$ 3.002,97</span>
<span class="t" style="font-size:11px;line-height:14px;top:564.0px;color:#000;left:29.62px;transform-origin:100% 50%;transform:scaleX(0.978);">%  Desconto</span>
<div style="left:100px;top:564px;width:116px;height:21px;background:#fff;border:1px solid #bcbcbc;box-sizing:border-box;"></div>
<span class="t" style="font-size:11px;line-height:14px;top:566.0px;color:#6d6d6d;left:178.84px;transform-origin:100% 50%;transform:scaleX(1.0102);">0,0000</span>
<span class="t" style="font-size:11px;line-height:14px;top:589.0px;color:#000;left:9.47px;transform-origin:100% 50%;transform:scaleX(0.9693);">( - ) Vl. Desconto</span>
<div style="left:100px;top:589px;width:116px;height:21px;background:#fff;border:1px solid #bcbcbc;box-sizing:border-box;"></div>
<span class="t" style="font-size:11px;line-height:14px;top:591.0px;color:#6d6d6d;left:173.97px;transform-origin:100% 50%;transform:scaleX(1.0122);">R$ 0,00</span>
<span class="t" style="font-size:11px;line-height:14px;top:614.5px;color:#000;left:26.27px;transform-origin:100% 50%;transform:scaleX(1.0193);">( = ) SubTotal</span>
<div style="left:100px;top:615px;width:116px;height:21px;background:#fff;border:1px solid #bcbcbc;box-sizing:border-box;"></div>
<span class="t" style="font-size:11px;line-height:14px;top:617.5px;color:#000;left:169.67px;transform-origin:100% 50%;transform:scaleX(1.0274);">3.002,97</span>
<span class="t" style="font-size:11px;line-height:14px;top:564.0px;color:#000;left:327.06px;transform-origin:100% 50%;transform:scaleX(1.0254);">( + ) Vl.Frete</span>
<div style="left:395px;top:564px;width:118px;height:21px;background:#fff;border:1px solid #bcbcbc;box-sizing:border-box;"></div>
<span class="t" style="font-size:11px;line-height:14px;top:566.0px;color:#6d6d6d;left:470.97px;transform-origin:100% 50%;transform:scaleX(1.0122);">R$ 0,00</span>
<span class="t" style="font-size:11px;line-height:14px;top:589.0px;color:#000;left:294.95px;transform-origin:100% 50%;transform:scaleX(1.028);">( + ) Taxa Entrega</span>
<div style="left:394px;top:589px;width:119px;height:21px;background:#fff;border:1px solid #bcbcbc;box-sizing:border-box;"></div>
<span class="t" style="font-size:11px;line-height:14px;top:591.0px;color:#6d6d6d;left:470.97px;transform-origin:100% 50%;transform:scaleX(1.0122);">R$ 0,00</span>
<span class="t" style="font-size:11px;line-height:14px;top:614.5px;color:#000;font-weight:700;left:313.52px;transform-origin:100% 50%;transform:scaleX(1.1129);">( = ) T O T A L</span>
<div style="left:394px;top:615px;width:119px;height:21px;background:#fff;border:1px solid #bcbcbc;box-sizing:border-box;"></div>
<span class="t" style="font-size:11px;line-height:14px;top:617.5px;color:#000;left:466.67px;transform-origin:100% 50%;transform:scaleX(1.0274);">3.002,97</span>
<span class="t" style="font-size:11px;line-height:14px;top:542.0px;color:#000;left:549.52px;transform-origin:50% 50%;transform:scaleX(1.001);">Qt.Vol</span>
<div style="left:544px;top:564px;width:47px;height:21px;background:#fff;border:1px solid #bcbcbc;box-sizing:border-box;"></div>
<span class="t" style="font-size:11px;line-height:14px;top:566.0px;color:#6d6d6d;left:563.94px;transform-origin:50% 50%;transform:scaleX(0.9796);">1</span>
<div style="left:602px;top:501px;width:191px;height:31px;background:#efefef;border:1px solid #b9b9b9;box-sizing:border-box;"></div>
<span class="t" style="font-size:13px;line-height:17px;top:508.5px;color:#a0a0a0;left:622.34px;transform-origin:50% 50%;transform:scaleX(0.9313);">F6 - C<u>a</u>rnê de Pagamento</span>
<div style="left:795px;top:501px;width:150px;height:30px;background:#fdfdfd;border:1px solid #8a8a8a;box-sizing:border-box;"></div>
<span class="t" style="font-size:13px;line-height:17px;top:508.0px;color:#000;left:800.5px;transform-origin:50% 50%;transform:scaleX(0.9474);">F10 - P<u>e</u>dido de Venda</span>
<div style="left:602px;top:533px;width:98px;height:31px;background:#efefef;border:1px solid #b9b9b9;box-sizing:border-box;"></div>
<span class="t" style="font-size:13px;line-height:17px;top:540.5px;color:#a0a0a0;left:603.32px;transform-origin:50% 50%;transform:scaleX(0.8809);">F7 - Promissória</span>
<div style="left:702px;top:533px;width:91px;height:31px;background:#efefef;border:1px solid #b9b9b9;box-sizing:border-box;"></div>
<span class="t" style="font-size:13px;line-height:17px;top:540.5px;color:#a0a0a0;left:703.78px;transform-origin:50% 50%;transform:scaleX(0.9149);">F8 - D<u>u</u>plicatas</span>
<div style="left:795px;top:533px;width:151px;height:31px;background:#efefef;border:1px solid #b9b9b9;box-sizing:border-box;"></div>
<span class="t" style="font-size:13px;line-height:17px;top:540.5px;color:#a0a0a0;left:851.36px;transform-origin:50% 50%;transform:scaleX(0.8359);">NFC-e</span>
<div style="left:602px;top:565px;width:192px;height:31px;background:#efefef;border:1px solid #b9b9b9;box-sizing:border-box;"></div>
<span class="t" style="font-size:13px;line-height:17px;top:572.5px;color:#a0a0a0;left:679.45px;transform-origin:50% 50%;transform:scaleX(0.9271);">F9 - <u>B</u>oletos</span>
<div style="left:795px;top:565px;width:151px;height:31px;background:#efefef;border:1px solid #b9b9b9;box-sizing:border-box;"></div>
<span class="t" style="font-size:13px;line-height:17px;top:572.5px;color:#a0a0a0;left:856.05px;transform-origin:50% 50%;transform:scaleX(0.8653);">NF-e</span>
<div style="left:603px;top:597px;width:95px;height:31px;background:#efefef;border:1px solid #b9b9b9;box-sizing:border-box;"></div>
<span class="t" style="font-size:13px;line-height:17px;top:604.5px;color:#a0a0a0;left:629.55px;transform-origin:50% 50%;transform:scaleX(0.9068);">Faturar</span>
<div style="left:700px;top:597px;width:93px;height:31px;background:#efefef;border:1px solid #b9b9b9;box-sizing:border-box;"></div>
<span class="t" style="font-size:13px;line-height:17px;top:604.5px;color:#a0a0a0;left:732.73px;transform-origin:50% 50%;transform:scaleX(0.9441);"><u>E</u>ntrega</span>
<div style="left:795px;top:597px;width:150px;height:30px;background:#fdfdfd;border:1px solid #8a8a8a;box-sizing:border-box;"></div>
<span class="t" style="font-size:13px;line-height:17px;top:604.0px;color:#000;left:856.09px;transform-origin:50% 50%;transform:scaleX(0.9146);"><u>O</u>pções</span>
<svg width="26" height="23" style="left:649px;top:570px" viewBox="0 0 26 23">
<rect x=".5" y=".5" width="24" height="21" fill="#f4f4f4" stroke="#9a9a9a"/>
<path d="M5,3 V18 M8,3 V15 M10.5,3 V15 M13,3 V15 M16,3 V15 M18.5,3 V15 M21,3 V18" stroke="#8a8a8a" stroke-width="1.3"/>
<path d="M8,17.5 H19" stroke="#9a9a9a" stroke-width="1.6" stroke-dasharray="2.2 1.2"/></svg>
<span class="t" style="font-size:6.5px;line-height:8px;top:602.5px;color:#8a8a8a;left:713.81px;transform-origin:50% 50%;transform:scaleX(0.972);">ABC</span>
<svg width="14" height="14" style="left:839px;top:605.3px" viewBox="0 0 14 14"><path d="M7,1.2 V12.8 M1.2,7 H12.8" stroke="#1b741b" stroke-width="3"/></svg>
<span class="t" style="font-size:11px;line-height:14px;top:673.0px;color:#000;left:9px;transform-origin:0 50%;transform:scaleX(0.9759);">Cadastrado por</span>
<span class="t" style="font-size:11px;line-height:14px;top:673.0px;color:#000;left:88.5px;transform-origin:0 50%;transform:scaleX(0.9132);">|AMELIA JULIANA</span>
<span class="t" style="font-size:11px;line-height:14px;top:673.0px;color:#000;left:180px;transform-origin:0 50%;transform:scaleX(1.028);">| 10/04/2025 | 14:32:32 |</span>
<span class="t" style="font-size:11px;line-height:14px;top:673.0px;color:#000;left:306.3px;transform-origin:0 50%;transform:scaleX(0.971);">Alterado por</span>
<span class="t" style="font-size:11px;line-height:14px;top:673.0px;color:#000;left:370.3px;transform-origin:0 50%;">|</span>
<span class="t" style="font-size:11px;line-height:14px;top:673.0px;color:#000;left:376px;transform-origin:0 50%;transform:scaleX(0.8636);">YULAINE DEYSE N</span>
<span class="t" style="font-size:11px;line-height:14px;top:673.0px;color:#000;left:466.5px;transform-origin:0 50%;transform:scaleX(1.018);">| 10/04/2025 | 16:51:19</span>
</body></html>
